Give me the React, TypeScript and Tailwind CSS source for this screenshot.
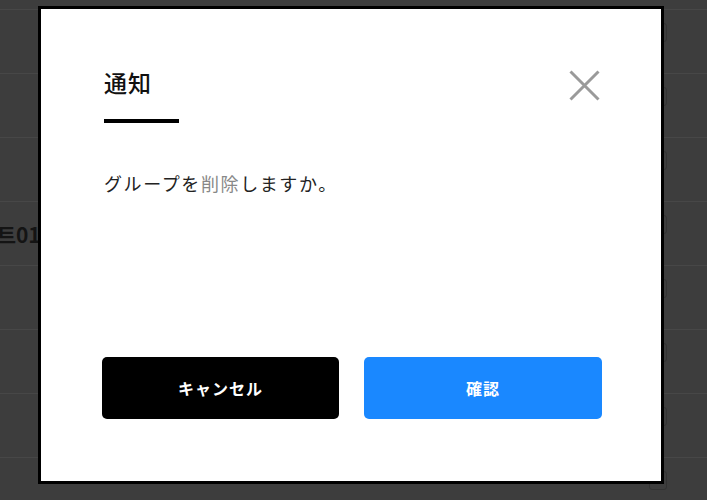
const rows = Array.from({ length: 8 }, (_, i) => i);

export default function App() {
  return (
    <div
      className="relative w-[707px] h-[500px] overflow-hidden bg-[#3d3d3d]"
      style={{ fontFamily: '"Noto Sans CJK JP", "Noto Sans", sans-serif' }}
    >
      {/* Dimmed page behind the dialog */}
      <div className="pt-[9px]">
        {rows.map((i) => (
          <div
            key={i}
            className="h-[64px] border-t border-[#474747] flex items-center justify-between pr-[40px]"
          >
            <span className="-ml-[42px] text-[21px] font-bold text-[#141414] mt-[2px]">
              {i === 3 ? "테스트01" : ""}
            </span>
            <span className="w-[18px] h-[19px] rounded-[3px] border border-[#333333] mt-[-18px]" />
          </div>
        ))}
      </div>

      {/* Dialog */}
      <div className="absolute left-[38px] top-[6px] w-[626px] h-[478px] border-[3px] border-black bg-white flex flex-col px-[58px] pt-[57px] pb-[62px]">
        <div className="flex items-start justify-between pl-[5px]">
          <div>
            <h2 className="text-[23px] leading-[32px] font-medium tracking-[1px] text-[#111]">
              通知
            </h2>
            <div className="mt-[21px] w-[75px] h-[3.5px] bg-black" />
          </div>
          <button className="mt-[4px] mr-[3px]">
            <svg width="31" height="31" viewBox="0 0 31 31" fill="none">
              <path
                d="M1.5 1.5 L29.5 29.5 M29.5 1.5 L1.5 29.5"
                stroke="#9a9a9a"
                strokeWidth="3"
              />
            </svg>
          </button>
        </div>

        <p className="mt-[47px] pl-[5px] text-[18px] leading-[27px] tracking-[1.6px] text-[#222]">
          グループを<span className="text-[#888]">削除</span>しますか。
        </p>

        <div className="mt-auto flex gap-[25px] pl-[3px] pr-[1px]">
          <button className="w-[237px] h-[62px] rounded-[5px] bg-black text-white text-[16px] font-bold tracking-[1px]">
            キャンセル
          </button>
          <button className="flex-1 h-[62px] rounded-[5px] bg-[#1a88ff] text-white text-[16px] font-bold tracking-[1px]">
            確認
          </button>
        </div>
      </div>
    </div>
  );
}
